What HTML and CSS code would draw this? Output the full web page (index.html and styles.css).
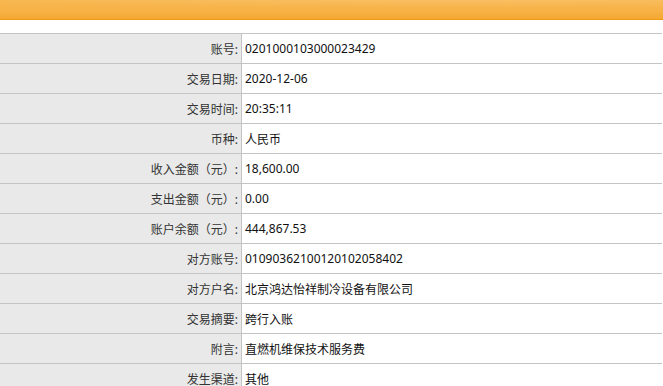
FILE: index.html
```html
<!DOCTYPE html>
<html lang="zh-CN">
<head>
<meta charset="utf-8">
<title>交易明细</title>
<link rel="stylesheet" href="styles.css">
</head>
<body>
<div class="topbar"></div>
<div class="detail">
  <div class="row"><div class="label">账号:</div><div class="value">0201000103000023429</div></div>
  <div class="row"><div class="label">交易日期:</div><div class="value">2020-12-06</div></div>
  <div class="row"><div class="label">交易时间:</div><div class="value">20:35:11</div></div>
  <div class="row"><div class="label">币种:</div><div class="value">人民币</div></div>
  <div class="row"><div class="label">收入金额（元）:</div><div class="value">18,600.00</div></div>
  <div class="row"><div class="label">支出金额（元）:</div><div class="value">0.00</div></div>
  <div class="row"><div class="label">账户余额（元）:</div><div class="value">444,867.53</div></div>
  <div class="row"><div class="label">对方账号:</div><div class="value">01090362100120102058402</div></div>
  <div class="row"><div class="label">对方户名:</div><div class="value">北京鸿达怡祥制冷设备有限公司</div></div>
  <div class="row"><div class="label">交易摘要:</div><div class="value">跨行入账</div></div>
  <div class="row"><div class="label">附言:</div><div class="value">直燃机维保技术服务费</div></div>
  <div class="row"><div class="label">发生渠道:</div><div class="value">其他</div></div>
</div>
</body>
</html>
```
FILE: styles.css
```css
html, body {
  margin: 0;
  padding: 0;
  background: #ffffff;
}
body {
  font-family: "Noto Sans", "Noto Sans CJK SC", sans-serif;
  font-size: 12px;
  color: #1a1a1a;
  overflow: hidden;
}
.topbar {
  height: 19px;
  border-bottom: 1px solid #f09a12;
  background:
    radial-gradient(ellipse 120% 60% at 70% 0%, rgba(255,255,255,0.12), rgba(255,255,255,0) 70%),
    linear-gradient(to bottom, #f8b74e 0%, #f7b247 55%, #f5a832 100%);
}
.detail {
  margin-top: 13px;
  margin-right: 1px;
}
.row {
  display: grid;
  grid-template-columns: 242px 1fr;
  height: 30px;
  box-sizing: border-box;
  border-top: 1px solid #c4c4c4;
}
.label {
  background: #e8e9e8;
  border-right: 1px solid #c4c4c4;
  text-align: right;
  padding-right: 3px;
  display: flex;
  align-items: center;
  justify-content: flex-end;
  color: #333333;
}
.value {
  display: flex;
  align-items: center;
  padding-left: 3px;
  color: #111111;
}
```
